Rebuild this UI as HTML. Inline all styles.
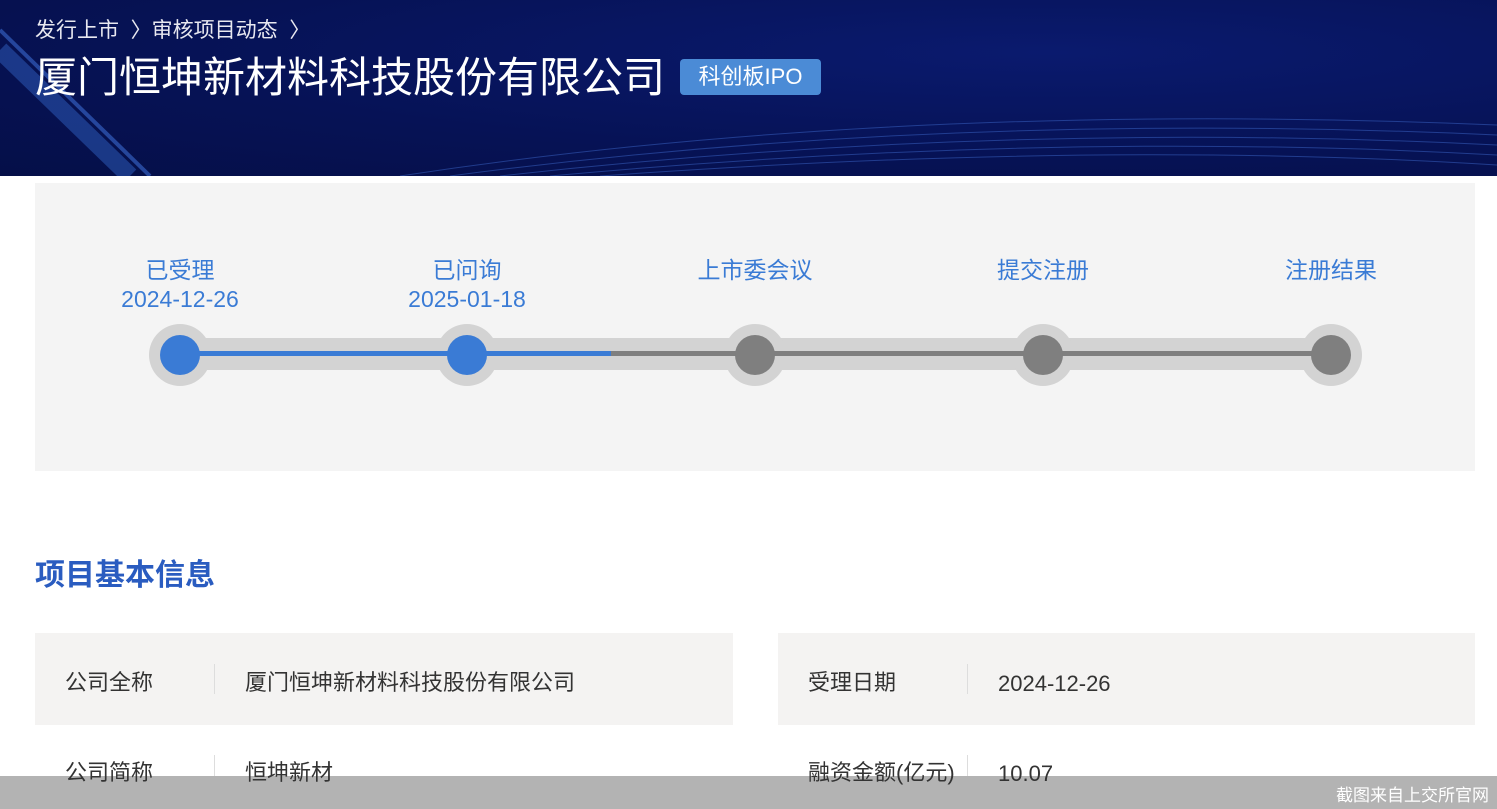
<!DOCTYPE html><html><head><meta charset="utf-8"><style>
body{margin:0;width:1497px;height:809px;overflow:hidden;background:#fff;font-family:"Liberation Sans","Noto Sans CJK SC",sans-serif;position:relative}
.hdr{position:absolute;left:0;top:0;width:1497px;height:176px;background:radial-gradient(ellipse at 70% 30%,#0a1a6e,#061255 60%,#050f48);overflow:hidden}
.a{position:absolute;color:#fff}
.box{position:absolute;left:35px;top:183px;width:1440px;height:288px;background:#f4f4f4}
.lbl{position:absolute;color:#3a7bd5;font-size:23px;text-align:center;width:240px;line-height:29px}
.row{position:absolute;height:92px;background:#f4f3f2}
.k{position:absolute;font-size:22px;color:#333;line-height:30px;z-index:2}
.n{margin-top:1px}
.sep{position:absolute;width:1px;height:30px;background:#ddd}
</style></head><body>
<div class="hdr">
<svg width="1497" height="176" style="position:absolute;left:0;top:0">
<path d="M0 50 L130 176" stroke="#2f5fc0" stroke-width="18" opacity=".5" fill="none"/>
<path d="M0 30 L150 176" stroke="#3a6ad0" stroke-width="4" opacity=".6" fill="none"/>
<g fill="none" stroke="#3c66c8" opacity=".5">
<path d="M400 176 Q900 100 1497 125"/><path d="M450 176 Q950 110 1497 135"/><path d="M500 176 Q1000 120 1497 145"/><path d="M550 176 Q1050 130 1497 155"/><path d="M600 176 Q1100 140 1497 165"/></g>
</svg>
<div class="a" style="left:35px;top:14px;font-size:21px;color:#e8e8f0">发行上市 &nbsp;〉审核项目动态 &nbsp;〉</div>
<div class="a" style="left:35px;top:52px;font-size:42px;line-height:52px">厦门恒坤新材料科技股份有限公司</div>
<div class="a" style="left:680px;top:59px;width:141px;height:36px;background:#4b8bd6;border-radius:4px;font-size:22px;line-height:36px;text-align:center">科创板IPO</div>
</div>
<div class="box"></div>
<div class="lbl" style="left:60px;top:256px">已受理<br>2024-12-26</div>
<div class="lbl" style="left:347px;top:256px">已问询<br>2025-01-18</div>
<div class="lbl" style="left:635px;top:256px">上市委会议</div>
<div class="lbl" style="left:923px;top:256px">提交注册</div>
<div class="lbl" style="left:1211px;top:256px">注册结果</div>
<svg width="1497" height="809" style="position:absolute;left:0;top:0">
<rect x="180" y="338" width="1151" height="32" fill="#d3d3d3"/>
<g fill="#d3d3d3"><circle cx="180" cy="355" r="31"/><circle cx="467" cy="355" r="31"/><circle cx="755" cy="355" r="31"/><circle cx="1043" cy="355" r="31"/><circle cx="1331" cy="355" r="31"/></g>
<rect x="180" y="351" width="431" height="5" fill="#3a7bd5"/>
<rect x="611" y="351" width="720" height="5" fill="#7f7f7f"/>
<circle cx="180" cy="355" r="20" fill="#3a7bd5"/><circle cx="467" cy="355" r="20" fill="#3a7bd5"/>
<g fill="#7f7f7f"><circle cx="755" cy="355" r="20"/><circle cx="1043" cy="355" r="20"/><circle cx="1331" cy="355" r="20"/></g>
</svg>
<div style="position:absolute;left:35px;top:550px;font-size:30px;font-weight:bold;color:#2a5cc0">项目基本信息</div>
<div class="row" style="left:35px;top:633px;width:698px"></div>
<div class="row" style="left:778px;top:633px;width:697px"></div>
<div class="k" style="left:65px;top:668px">公司全称</div><div class="sep" style="left:214px;top:664px"></div>
<div class="k" style="left:245px;top:668px">厦门恒坤新材料科技股份有限公司</div>
<div class="k" style="left:808px;top:668px">受理日期</div><div class="sep" style="left:967px;top:664px"></div>
<div class="k n" style="left:998px;top:668px">2024-12-26</div>
<div class="k" style="left:65px;top:758px">公司简称</div><div class="sep" style="left:214px;top:755px"></div>
<div class="k" style="left:245px;top:758px">恒坤新材</div>
<div class="k" style="left:808px;top:758px">融资金额(亿元)</div><div class="sep" style="left:967px;top:755px"></div>
<div class="k n" style="left:998px;top:758px">10.07</div>
<div style="position:absolute;left:0;top:776px;width:1497px;height:33px;background:#b3b3b3;z-index:1"></div>
<div style="position:absolute;right:8px;top:781px;font-size:17px;color:#fff;z-index:3">截图来自上交所官网</div>
</body></html>
